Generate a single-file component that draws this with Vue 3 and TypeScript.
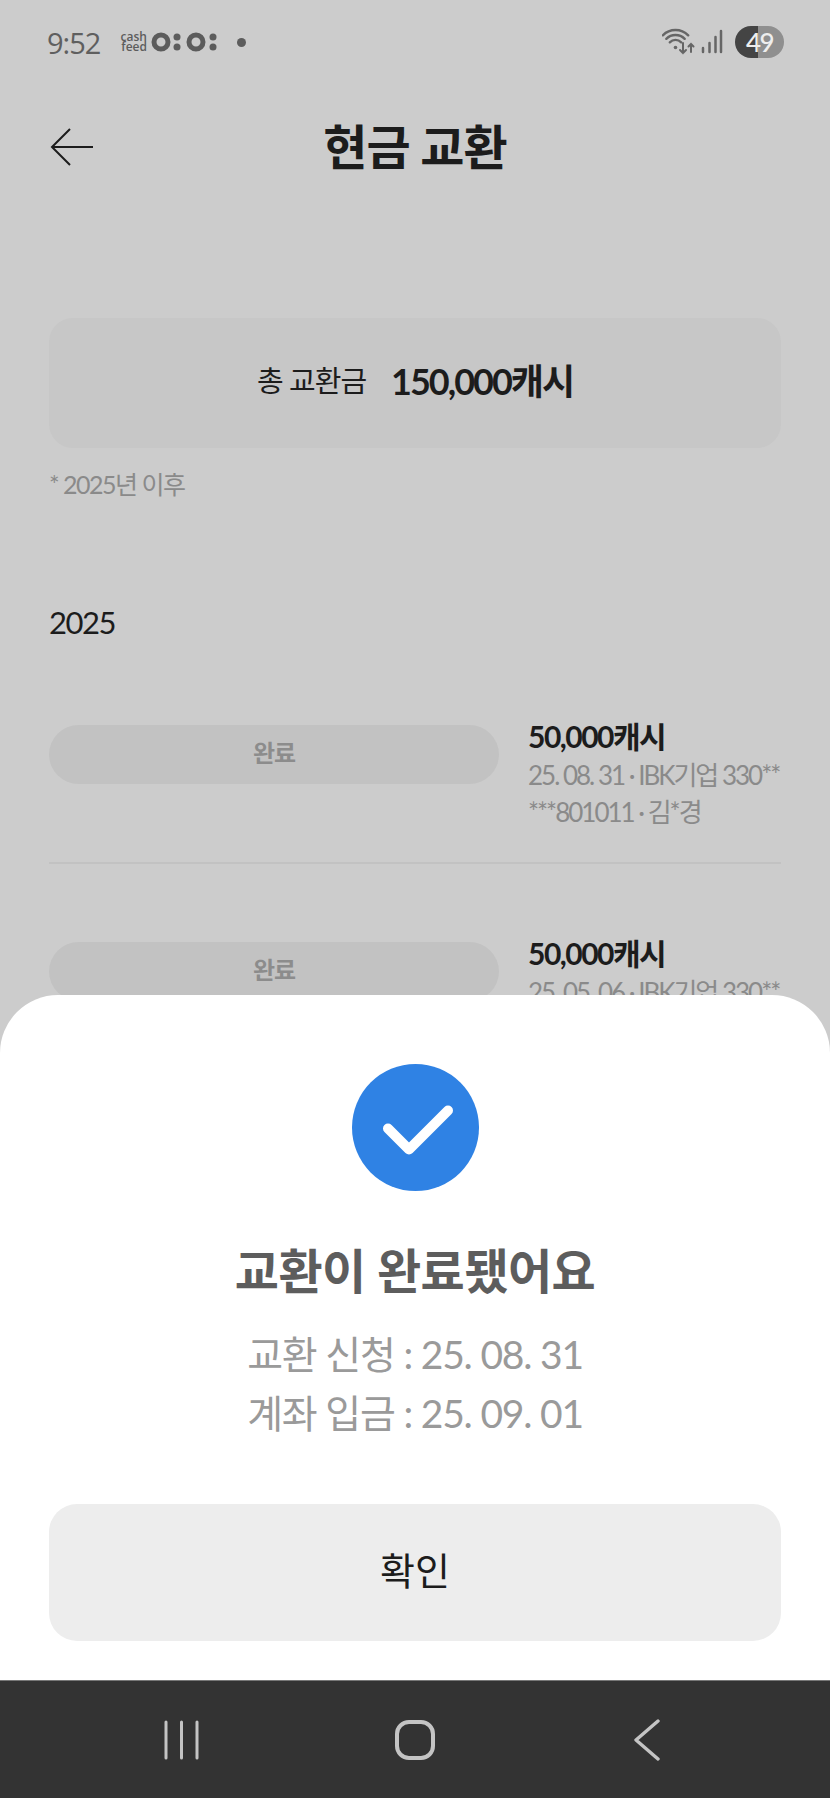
<template>
  <div class="screen">
    <div class="status">
      <div class="status-left">
        <span class="clock">9:52</span>
        <span class="cash"><span>cash</span><span class="feed">feed</span></span>
        <svg class="noti" width="66" height="24" viewBox="0 0 66 24">
          <circle cx="10" cy="12" r="7" fill="none" stroke="#5c5c5c" stroke-width="5" />
          <circle cx="26" cy="7" r="3.5" fill="#5c5c5c" />
          <circle cx="26" cy="17" r="3.5" fill="#5c5c5c" />
          <circle cx="45" cy="12" r="7" fill="none" stroke="#5c5c5c" stroke-width="5" />
          <circle cx="62" cy="7" r="3.5" fill="#5c5c5c" />
          <circle cx="62" cy="17" r="3.5" fill="#5c5c5c" />
        </svg>
        <i class="dot"></i>
      </div>
      <div class="status-right">
        <svg width="62" height="30" viewBox="0 0 62 30" fill="none" stroke="#666" stroke-linecap="round">
          <path d="M0.800 8.300A18 18 0 0 1 26.200 8.300" stroke-width="2.400" />
          <path d="M4.300 11.800A13 13 0 0 1 22.700 11.800" stroke-width="2.400" />
          <path d="M7.800 15.300A8 8 0 0 1 19.200 15.300" stroke-width="2.400" />
          <circle cx="13.500" cy="20.500" r="1.800" fill="#666" stroke="none" />
          <path d="M21 16V26M18 23L21 26L24 23M29 25V17M26.500 19.500L29 17L31.500 19.500" stroke-width="2" />
          <path d="M41 25V21M47.500 25V16M53.500 25V10M59 25V4" stroke-width="2.500" />
        </svg>
        <span class="battery"><span class="battery-text">49</span></span>
      </div>
    </div>

    <header class="top">
      <svg class="back" width="44" height="38" viewBox="0 0 44 38" fill="none" stroke="#1c1c1c" stroke-width="2">
        <path d="M43 19H2M20 1L2 19L20 37" />
      </svg>
      <h1>현금 교환</h1>
    </header>

    <main class="content">
      <section class="total">
        <span class="total-label">총 교환금</span>
        <strong class="total-value">150,000캐시</strong>
      </section>
      <p class="note">* 2025년 이후</p>
      <p class="year">2025</p>

      <div v-for="(item, i) in rows" :key="i" class="row" :class="{ first: i === 0 }">
        <span class="pill">완료</span>
        <div class="info">
          <div class="amount">{{ item.amount }}</div>
          <div class="detail">{{ item.line1 }}</div>
          <div class="detail">{{ item.line2 }}</div>
        </div>
      </div>
    </main>

    <div class="bottom">
      <section class="sheet">
        <svg class="check" width="127" height="127" viewBox="0 0 127 127">
          <circle cx="63.500" cy="63.500" r="63.500" fill="#2f82e4" />
          <path d="M36 64.500L57 85.500L96 46.500" fill="none" stroke="#fff" stroke-width="10" stroke-linecap="round" stroke-linejoin="round" />
        </svg>
        <h2>교환이 완료됐어요</h2>
        <p class="dates">교환 신청 : 25. 08. 31</p>
        <p class="dates">계좌 입금 : 25. 09. 01</p>
        <button class="confirm" type="button">확인</button>
      </section>
      <nav class="nav">
        <svg class="recents" width="35" height="40" viewBox="0 0 35 40" fill="none" stroke="#c4c4c4" stroke-width="3" stroke-linecap="round">
          <path d="M2 2V38M17.500 2V38M33 2V38" />
        </svg>
        <svg width="40" height="40" viewBox="0 0 40 40" fill="none" stroke="#c4c4c4" stroke-width="4">
          <rect x="2" y="2" width="36" height="36" rx="12" />
        </svg>
        <svg width="28" height="42" viewBox="0 0 28 42" fill="none" stroke="#c4c4c4" stroke-width="3.400" stroke-linecap="round" stroke-linejoin="round">
          <path d="M25 2L3 21L25 40" />
        </svg>
      </nav>
    </div>
  </div>
</template>

<script setup lang="ts">
interface Row {
  amount: string
  line1: string
  line2: string
}

const rows: Row[] = [
  { amount: '50,000캐시', line1: '25. 08. 31 · IBK기업 330**', line2: '***801011 · 김*경' },
  { amount: '50,000캐시', line1: '25. 05. 06 · IBK기업 330**', line2: '***801011 · 김*경' },
]
</script>

<style>
html, body { margin: 0; background: #ccc; }
</style>

<style scoped>
.screen {
  position: relative;
  width: 830px;
  height: 1798px;
  overflow: hidden;
  background: #ccc;
  font-family: Lato, "Noto Sans CJK KR", sans-serif;
  color: #1c1c1c;
}
.status {
  height: 84px;
  padding: 0 46px 0 47px;
  display: flex;
  align-items: center;
  justify-content: space-between;
  box-sizing: border-box;
}
.status-left, .status-right { display: flex; align-items: center; }
.clock { font: 500 29px "Open Sans", sans-serif; letter-spacing: -1px; color: #5f5f5f; width: 68px; }
.cash {
  display: flex;
  flex-direction: column;
  align-items: flex-end;
  width: 32px;
  font: 600 12px/10px "Open Sans", sans-serif;
  color: #5c5c5c;
}
.noti { margin-left: 4px; }
.dot { width: 9px; height: 9px; border-radius: 50%; background: #5c5c5c; margin-left: 20px; }
.status-right { gap: 11px; }
.battery {
  width: 49px;
  height: 32px;
  border-radius: 16px;
  background: linear-gradient(90deg, #444 0 47%, #8f8f8f 47% 100%);
  display: flex;
  align-items: center;
  justify-content: center;
}
.battery-text { font: 500 26px Lato, sans-serif; letter-spacing: -1.500px; color: #eee; }
.top {
  height: 126px;
  padding-bottom: 6px;
  box-sizing: border-box;
  position: relative;
  display: flex;
  align-items: center;
  justify-content: center;
}
.back { position: absolute; left: 50px; top: 44px; }
h1 { margin: 0; font-size: 48px; font-weight: 700; letter-spacing: -1px; }
.content { padding: 0 49px; }
.total {
  margin-top: 108px;
  height: 130px;
  padding-bottom: 8px;
  box-sizing: border-box;
  border-radius: 24px;
  background: #c7c7c7;
  display: flex;
  align-items: center;
  justify-content: center;
  gap: 25px;
}
.total-label { font-size: 29px; letter-spacing: -1px; }
.total-value { font-size: 36px; font-weight: 700; letter-spacing: -2px; }
.note { margin: 20px 0 0; font-size: 25px; line-height: 32px; color: #8a8a8a; letter-spacing: -1.500px; }
.year { margin: 104px 0 0; font-size: 31px; line-height: 36px; letter-spacing: -1.500px; }
.row {
  display: grid;
  grid-template-columns: 450px 1fr;
  column-gap: 29px;
  margin-top: 68px;
  padding-bottom: 31px;
}
.row.first { margin-top: 75px; border-bottom: 2px solid #c2c2c2; }
.pill {
  margin-top: 10px;
  height: 59px;
  padding-bottom: 6px;
  box-sizing: border-box;
  border-radius: 30px;
  background: #c2c2c2;
  color: #8c8c8c;
  font-size: 24px;
  font-weight: 700;
  letter-spacing: -1px;
  display: flex;
  align-items: center;
  justify-content: center;
}
.amount { font-size: 30px; font-weight: 700; line-height: 42px; letter-spacing: -1.500px; }
.detail { font-size: 26px; line-height: 37px; color: #8a8a8a; letter-spacing: -2px; white-space: nowrap; }
.bottom { position: absolute; left: 0; right: 0; bottom: 0; }
.sheet {
  height: 685px;
  box-sizing: border-box;
  padding: 69px 49px 0;
  background: #fff;
  border-radius: 58px 58px 0 0;
  display: flex;
  flex-direction: column;
  align-items: center;
}
.check { display: block; }
h2 { margin: 50px 0 24px; font-size: 48px; line-height: 60px; font-weight: 700; color: #5d5d5d; letter-spacing: -0.500px; }
.dates { margin: 0; font-size: 39px; line-height: 59px; color: #9a9a9a; letter-spacing: -1.200px; white-space: nowrap; }
.confirm {
  margin-top: 61px;
  width: 100%;
  height: 137px;
  padding: 0 0 9px;
  border: none;
  border-radius: 28px;
  background: #ededed;
  color: #1c1c1c;
  font-family: inherit;
  font-size: 38px;
}
.nav {
  height: 118px;
  background: #333;
  border-top: 1px solid #777;
  box-sizing: border-box;
  display: grid;
  grid-template-columns: 1fr 1fr 1fr;
  align-items: center;
  justify-items: center;
  padding: 0 67px;
}
.recents { margin-right: 4px; }
</style>
